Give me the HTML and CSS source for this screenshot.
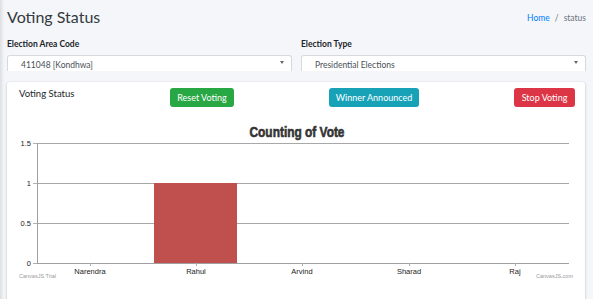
FILE: index.html
```html
<!DOCTYPE html>
<html lang="en">
<head>
    <meta charset="UTF-8">
    <meta name="viewport" content="width=device-width, initial-scale=1.0">
    <title>Voting Status</title>
    <link rel="stylesheet" href="styles.css">
</head>
<body>
    <div class="wrapper">
        <div class="content-header">
            <h1>Voting Status</h1>
            <div class="breadcrumb"><a href="#">Home</a><span class="sep">/</span>status</div>
        </div>

        <div class="filters">
            <div class="field">
                <label>Election Area Code</label>
                <div class="select-box">411048 [Kondhwa]<span class="caret"></span></div>
            </div>
            <div class="field">
                <label>Election Type</label>
                <div class="select-box">Presidential Elections<span class="caret"></span></div>
            </div>
        </div>

        <div class="card">
            <div class="card-top">
                <span class="card-title">Voting Status</span>
                <button class="btn btn-success">Reset Voting</button>
                <button class="btn btn-info">Winner Announced</button>
                <button class="btn btn-danger">Stop Voting</button>
            </div>

            <svg class="chart" width="556" height="172" viewBox="0 0 556 172">
                <text class="chart-title" x="278" y="25" text-anchor="middle" textLength="95" lengthAdjust="spacingAndGlyphs">Counting of Vote</text>

                <!-- grid -->
                <line class="grid" x1="18" y1="31.5" x2="550" y2="31.5"/>
                <line class="grid" x1="18" y1="71.5" x2="550" y2="71.5"/>
                <line class="grid" x1="18" y1="111.5" x2="550" y2="111.5"/>

                <rect class="bar" x="135" y="71" width="83" height="80"/>

                <!-- axes -->
                <line class="axis" x1="18.5" y1="31" x2="18.5" y2="151"/>
                <line class="axis" x1="18" y1="151.5" x2="550" y2="151.5"/>
                <line class="tick" x1="14" y1="31.5" x2="18" y2="31.5"/>
                <line class="tick" x1="14" y1="71.5" x2="18" y2="71.5"/>
                <line class="tick" x1="14" y1="111.5" x2="18" y2="111.5"/>
                <line class="tick" x1="14" y1="151.5" x2="18" y2="151.5"/>
                <line class="tick" x1="71.5" y1="151" x2="71.5" y2="154"/>
                <line class="tick" x1="177.5" y1="151" x2="177.5" y2="154"/>
                <line class="tick" x1="283.5" y1="151" x2="283.5" y2="154"/>
                <line class="tick" x1="390.5" y1="151" x2="390.5" y2="154"/>
                <line class="tick" x1="496.5" y1="151" x2="496.5" y2="154"/>

                <text class="label" x="12" y="34" text-anchor="end">1.5</text>
                <text class="label" x="12" y="74" text-anchor="end">1</text>
                <text class="label" x="12" y="114" text-anchor="end">0.5</text>
                <text class="label" x="12" y="154" text-anchor="end">0</text>

                <text class="label" x="71" y="162" text-anchor="middle">Narendra</text>
                <text class="label" x="177" y="162" text-anchor="middle">Rahul</text>
                <text class="label" x="283" y="162" text-anchor="middle">Arvind</text>
                <text class="label" x="390" y="162" text-anchor="middle">Sharad</text>
                <text class="label" x="496" y="162" text-anchor="middle">Raj</text>

                <text class="credit" x="0" y="166">CanvasJS Trial</text>
                <text class="credit" x="554" y="166" text-anchor="end">CanvasJS.com</text>
            </svg>
        </div>
    </div>
</body>
</html>
```

FILE: styles.css
```css
body {
    margin: 0;
    background-color: #f4f6f9;
    font-family: Lato, "Open Sans", sans-serif;
    color: #212529;
    height: 299px;
    overflow: hidden;
    box-shadow: inset 4px 0 3px -2px #dcdee2;
}
.wrapper {
    padding: 0 7px;
}
.content-header {
    display: flex;
    justify-content: space-between;
    align-items: center;
    padding-top: 5px;
}
h1 {
    margin: 0;
    font-size: 16px;
    font-weight: 400;
    line-height: 24px;
    color: #343a40;
}
.breadcrumb {
    font-size: 8.5px;
    color: #6c757d;
    padding-top: 2px;
}
.breadcrumb a {
    color: #007bff;
    text-decoration: none;
}
.breadcrumb .sep {
    padding: 0 5px;
}
.filters {
    display: flex;
    gap: 9px;
    margin-top: 9px;
}
.field {
    flex: 1;
}
.field label {
    display: block;
    font-size: 8.5px;
    font-weight: 700;
    color: #212529;
    line-height: 12px;
    margin-bottom: 5px;
}
.select-box {
    position: relative;
    height: 16px;
    overflow: hidden;
    background-color: white;
    border: 1px solid #d6dadf;
    border-bottom: none;
    border-radius: 3px 3px 0 0;
    padding: 3px 0 0 13px;
    box-sizing: border-box;
    font-size: 8.5px;
    line-height: 12px;
    color: #495057;
}
.caret { /* select arrow */
    position: absolute;
    right: 7px;
    top: 5px;
    width: 0;
    height: 0;
    border-left: 2px solid transparent;
    border-right: 2px solid transparent;
    border-top: 3px solid #666;
}
.card {
    margin-top: 11px;
    margin-right: 1px;
    background-color: white;
    border-radius: 3px;
    box-shadow: 0 0 1px rgba(0,0,0,0.125), 0 1px 3px rgba(0,0,0,0.2);
    padding: 6px 10px 0 12px;
    height: 218px;
}
.card-top {
    display: flex;
    align-items: flex-start;
}
.card-title {
    font-size: 9.5px;
    color: #212529;
    width: 151px;
    line-height: 12px;
}
.btn {
    font-family: Lato, "Open Sans", sans-serif;
    font-size: 9px;
    color: white;
    border: none;
    border-radius: 3px;
    height: 19px;
    padding: 0;
    white-space: nowrap;
    text-align: center;
    cursor: pointer;
}
.btn-success {
    background-color: #28a745;
    width: 64px;
}
.btn-info {
    background-color: #17a2b8;
    width: 90px;
    margin-left: 95px;
}
.btn-danger {
    background-color: #dc3545;
    width: 61px;
    margin-left: auto;
}
.chart {
    display: block;
    margin-top: 5px;
    font-family: "Liberation Sans", sans-serif;
}
.chart-title {
    font-weight: 700;
    font-size: 15px;
    fill: #333;
    stroke: #333;
    stroke-width: 0.6px;
}
.grid {
    stroke: #a8a8a8;
    stroke-width: 1;
}
.axis {
    stroke: #a0a0a0;
    stroke-width: 1;
}
.tick {
    stroke: #b0b0b0;
    stroke-width: 1;
}
.bar {
    fill: #c0504e;
}
.label {
    font-size: 7.5px;
    fill: #222;
}
.credit {
    font-size: 5.5px;
    fill: #999;
}
```
